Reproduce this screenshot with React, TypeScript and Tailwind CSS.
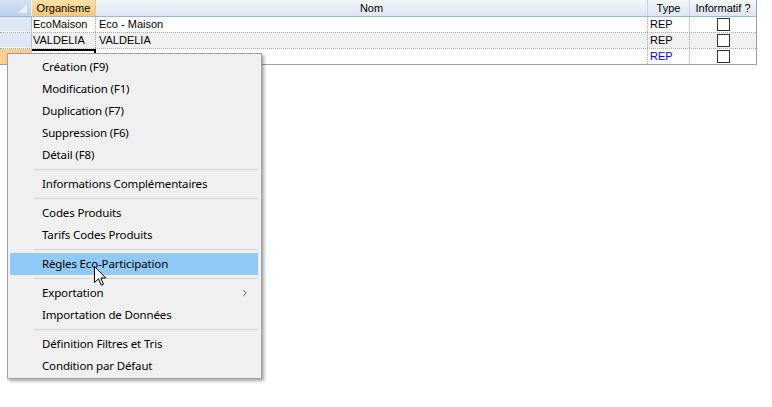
import { ChevronRight } from "lucide-react";

const rows = [
  { org: "EcoMaison", nom: "Eco - Maison", type: "REP", bg: "bg-white", blue: false },
  { org: "VALDELIA", nom: "VALDELIA", type: "REP", bg: "bg-[#f0f0f0]", blue: false },
  { org: "", nom: "", type: "REP", bg: "bg-white", blue: true },
];

type Entry = { label: string; sep?: false; active?: boolean; sub?: boolean } | { sep: true };

const menu: Entry[] = [
  { label: "Création (F9)" },
  { label: "Modification (F1)" },
  { label: "Duplication (F7)" },
  { label: "Suppression (F6)" },
  { label: "Détail (F8)" },
  { sep: true },
  { label: "Informations Complémentaires" },
  { sep: true },
  { label: "Codes Produits" },
  { label: "Tarifs Codes Produits" },
  { sep: true },
  { label: "Règles Eco-Participation", active: true },
  { sep: true },
  { label: "Exportation", sub: true },
  { label: "Importation de Données" },
  { sep: true },
  { label: "Définition Filtres et Tris" },
  { label: "Condition par Défaut" },
];

const Checkbox = () => (
  <div className="w-[13px] h-[13px] border border-[#333] bg-white" />
);

const App = () => {
  return (
    <div className="relative w-[772px] h-[407px] bg-white overflow-hidden font-['Liberation_Sans',Arial,sans-serif] text-[11px] text-black">
      {/* Grid */}
      <div className="w-[757px] border-r border-[#a0a0a0]">
        {/* Header */}
        <div className="flex h-[17px] border-b border-[#9fb6d6]">
          <div className="relative w-[32px] bg-gradient-to-b from-[#d3e1f3] to-[#bcd0ec] border-r border-[#e9eff8]">
            <div className="absolute right-[4px] bottom-[3px] w-0 h-0 border-l-[9px] border-l-transparent border-b-[9px] border-b-[#e9f0fa]" />
          </div>
          <div className="w-[64px] flex items-center justify-center bg-gradient-to-b from-[#fce1a6] to-[#f6c878] border-r border-[#e7c48a]">
            Organisme
          </div>
          <div className="w-[552px] flex items-center justify-center bg-gradient-to-b from-[#f4f7fc] to-[#dde6f3] border-r border-[#c6d5ea]">
            Nom
          </div>
          <div className="w-[42px] flex items-center justify-center bg-gradient-to-b from-[#f4f7fc] to-[#dde6f3] border-r border-[#c6d5ea]">
            Type
          </div>
          <div className="flex-1 flex items-center justify-center bg-gradient-to-b from-[#f4f7fc] to-[#dde6f3]">
            Informatif ?
          </div>
        </div>

        {/* Rows */}
        {rows.map((r, i) => (
          <div
            key={i}
            className={`flex h-[16px] ${i < 2 ? "border-b border-dotted border-[#a8a8a8]" : "border-b border-[#a0a0a0]"}`}
          >
            <div
              className={`w-[32px] border-r border-[#a9bfdc] ${
                i === 2 ? "bg-[#f8d08f]" : "bg-[#dde7f5] border-b border-b-[#eef3fa]"
              }`}
            />
            <div
              className={`w-[64px] px-[1px] flex items-center ${r.bg} ${
                i === 2 ? "border-t-2 border-r-2 border-black" : "border-r border-dotted border-[#a8a8a8]"
              }`}
            >
              {r.org}
            </div>
            <div className={`w-[552px] px-[3px] flex items-center ${r.bg} border-r border-dotted border-[#a8a8a8]`}>
              {r.nom}
            </div>
            <div
              className={`w-[42px] px-[2px] flex items-center ${r.bg} border-r border-dotted border-[#a8a8a8] ${
                r.blue ? "text-[#0000ff]" : ""
              }`}
            >
              {r.type}
            </div>
            <div className={`flex-1 flex items-center justify-center ${r.bg}`}>
              <Checkbox />
            </div>
          </div>
        ))}
      </div>

      {/* Context menu */}
      <div className="absolute left-[7px] top-[53px] w-[255px] bg-[#f0f0f0] border border-[#a0a0a0] pt-[2px] pb-[1px] px-[1px] shadow-[2px_2px_3px_rgba(0,0,0,0.35)] font-['Noto_Sans',sans-serif] text-[11.5px] tracking-[-0.15px] text-[#000]">
        {menu.map((m, i) =>
          m.sep ? (
            <div key={i} className="h-[7px] flex items-center pl-[25px] pr-[2px]">
              <div className="h-px w-full bg-[#d7d7d7]" />
            </div>
          ) : (
            <div
              key={i}
              className={`relative h-[22px] flex items-center pl-[32px] ml-[1px] mr-[2px] ${
                m.active ? "bg-[#91c9f7]" : ""
              }`}
            >
              <span>{m.label}</span>
              {m.sub && (
                <ChevronRight className="absolute right-[8px] top-[6px] w-[10px] h-[10px] text-[#333]" strokeWidth={2} />
              )}
            </div>
          )
        )}
      </div>

      {/* Mouse cursor */}
      <svg className="absolute left-[94px] top-[266px]" width="13" height="21" viewBox="0 0 13 21">
        <path
          d="M0.5 0.5 L0.5 16.5 L4.5 12.8 L7.2 19.2 L9.4 18.3 L6.8 12 L11.8 12 Z"
          fill="white"
          stroke="black"
          strokeWidth="1"
          strokeLinejoin="miter"
        />
      </svg>
    </div>
  );
};

export default App;
